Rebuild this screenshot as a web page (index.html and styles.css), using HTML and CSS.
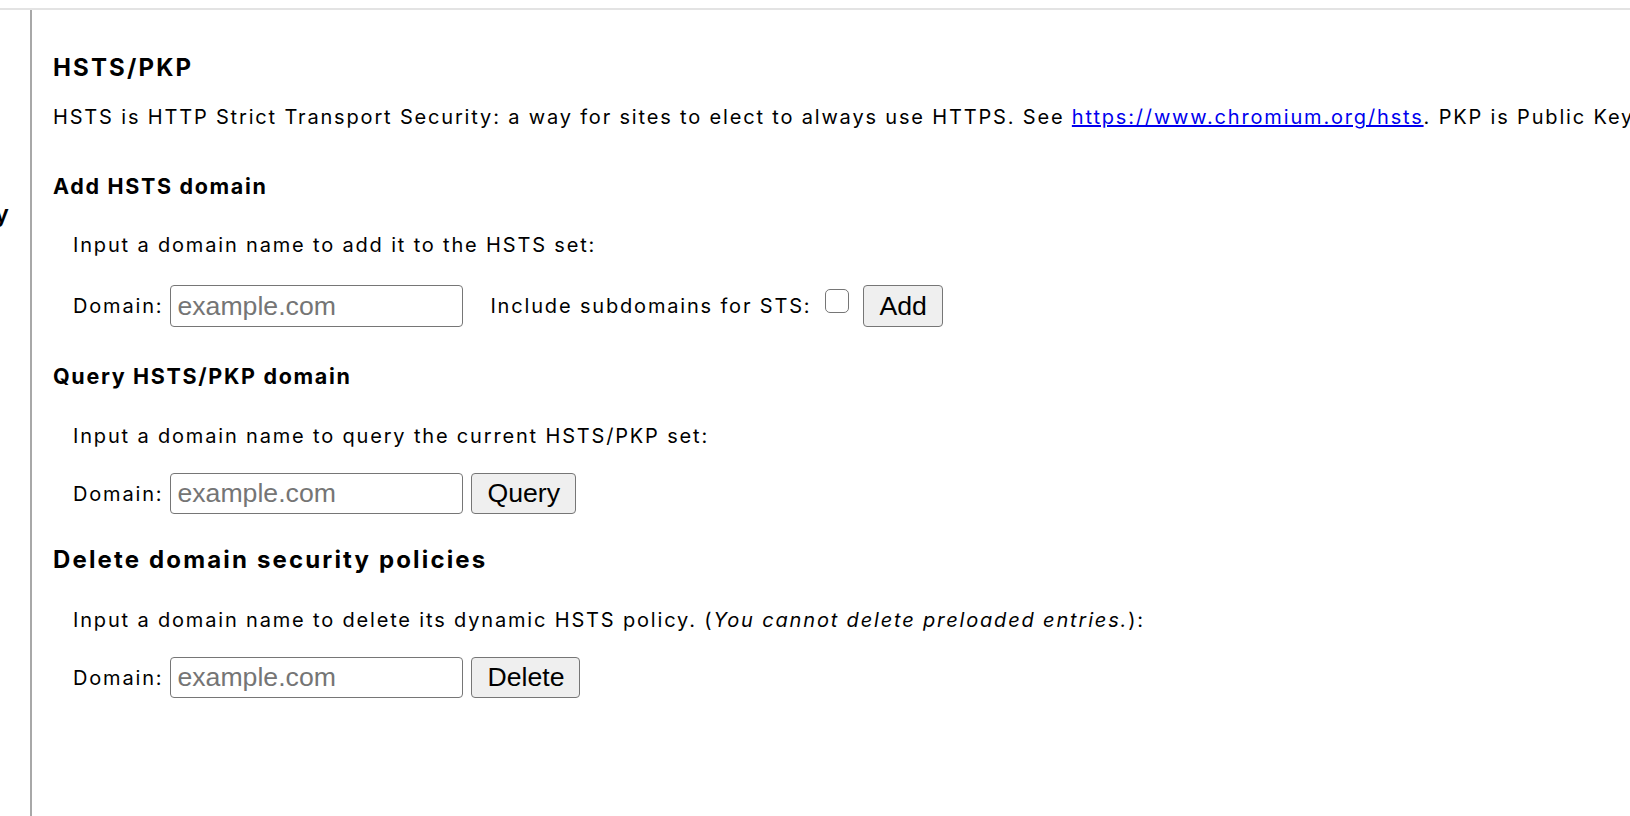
FILE: index.html
```html
<!DOCTYPE html>
<html lang="en">
<head>
<meta charset="utf-8">
<title>net-internals - Domain Security Policy</title>
<link rel="stylesheet" href="styles.css">
</head>
<body>
<div class="tabbar"></div>
<div class="main">
  <nav class="sidebar">
    <div class="nav-item selected">Domain Security Policy</div>
  </nav>
  <section class="content">
    <h2 class="title">HSTS/PKP</h2>
    <p class="intro">HSTS is HTTP Strict Transport Security: a way for sites to elect to always use HTTPS. See <a href="#">https://www.chromium.org/hsts</a>. PKP is Public Key Pinning: Chrome "pins" certain public keys for certain sites in official builds.</p>

    <h3 class="sub sub-add">Add HSTS domain</h3>
    <p class="hint">Input a domain name to add it to the HSTS set:</p>
    <form class="row row-add">
      <label class="label">Domain:</label>
      <input class="field" type="text" placeholder="example.com">
      <label class="label include">Include subdomains for STS:</label>
      <span class="check"></span>
      <button class="btn btn-add" type="button">Add</button>
    </form>

    <h3 class="sub sub-query">Query HSTS/PKP domain</h3>
    <p class="hint hint-tight">Input a domain name to query the current HSTS/PKP set:</p>
    <form class="row row-tight">
      <label class="label">Domain:</label>
      <input class="field" type="text" placeholder="example.com">
      <button class="btn" type="button">Query</button>
    </form>

    <h2 class="title title-del">Delete domain security policies</h2>
    <p class="hint">Input a domain name to delete its dynamic HSTS policy. (<i>You cannot delete preloaded entries.</i>):</p>
    <form class="row row-tight">
      <label class="label">Domain:</label>
      <input class="field" type="text" placeholder="example.com">
      <button class="btn" type="button">Delete</button>
    </form>
  </section>
</div>
</body>
</html>
```

FILE: styles.css
```css
html, body {
  margin: 0;
  padding: 0;
  background: #ffffff;
  overflow: hidden;
}

body {
  font-family: Inter, "Noto Sans", sans-serif;
  font-size: 20px;
  letter-spacing: 1.83px;
  color: #000000;
  width: 1630px;
  height: 816px;
}

.tabbar {
  height: 8px;
  border-bottom: 2px solid #e3e3e3;
}

.main {
  display: flex;
  height: 806px;
}

.sidebar {
  width: 30px;
  flex: none;
  border-right: 2px solid #a8a8a8;
  overflow: hidden;
  display: flex;
  flex-direction: column;
  align-items: flex-end;
  padding-top: 192px;
}

.nav-item {
  white-space: nowrap;
  line-height: 24px;
  padding-right: 21px;
  font-size: 24px;
  letter-spacing: 0;
}

.nav-item.selected {
  font-weight: 600;
}

.content {
  flex: 1;
  padding-left: 21px;
  min-width: 0;
}

.title {
  margin: 44px 0 0 0;
  font-size: 24px;
  line-height: 28px;
  font-weight: 700;
  letter-spacing: 2.15px;
}

.title-del {
  margin-top: 32px;
}

.intro {
  margin: 23px 0 0 0;
  line-height: 24px;
  white-space: nowrap;
}

.intro a {
  color: #0000ee;
}

.sub {
  margin: 44px 0 0 0;
  font-size: 21.5px;
  line-height: 26px;
  font-weight: 700;
  letter-spacing: 1.67px;
}

.sub-query {
  margin-top: 36px;
}

.hint {
  margin: 34px 0 0 20px;
  line-height: 24px;
  white-space: nowrap;
}

.hint-tight {
  margin-top: 35px;
}

.row {
  margin: 25px 0 0 20px;
  display: flex;
  align-items: center;
  height: 41px;
}

.row-add {
  margin-top: 28px;
  height: 42px;
}

.label {
  line-height: 24px;
  margin-right: 7px;
  white-space: nowrap;
}

.include {
  margin-left: 27px;
  margin-right: 14px;
}

.field {
  box-sizing: border-box;
  width: 293px;
  height: 41px;
  margin: 0;
  padding: 0 6px;
  border: 1px solid #767676;
  border-radius: 4px;
  font-family: "Liberation Sans", Arial, sans-serif;
  font-size: 26.67px;
  letter-spacing: 0;
  color: #000;
  background: #fff;
}

.row-add .field {
  height: 42px;
}

.field::placeholder {
  color: #757575;
}

.check {
  width: 24px;
  height: 24px;
  box-sizing: border-box;
  border: 1.5px solid #767676;
  border-radius: 5px;
  margin-right: 14px;
  align-self: flex-start;
  margin-top: 4px;
  background: #fff;
}

.btn {
  box-sizing: border-box;
  height: 41px;
  margin: 0 0 0 8px;
  padding: 0 15px;
  border: 1px solid #767676;
  border-radius: 4px;
  background: #efefef;
  font-family: "Liberation Sans", Arial, sans-serif;
  font-size: 26.67px;
  letter-spacing: 0;
  color: #000;
}

.btn-add {
  margin-left: 0;
  height: 42px;
}
```
